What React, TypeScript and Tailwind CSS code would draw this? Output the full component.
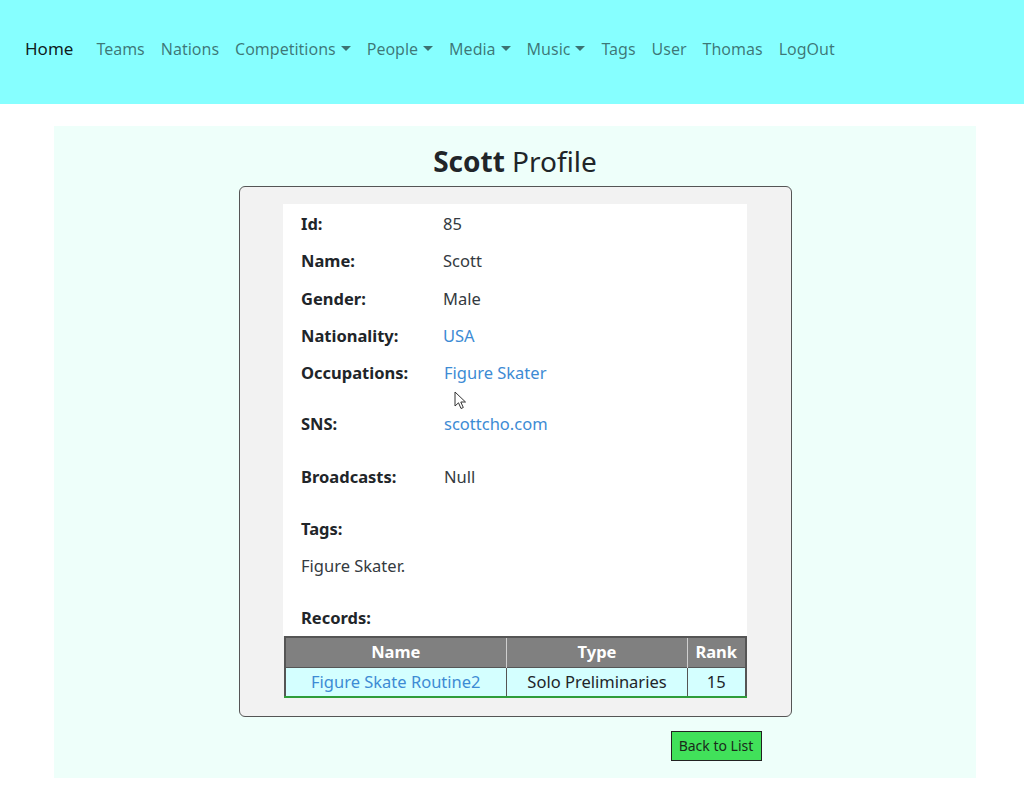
import React from "react";

const Caret = () => (
  <span className="inline-block ml-[5px] align-middle w-0 h-0 border-l-[5px] border-r-[5px] border-t-[5px] border-l-transparent border-r-transparent border-t-current relative top-[-2px]" />
);

function NavItem({ label, caret }: { label: string; caret?: boolean }) {
  return (
    <span className="px-[8px] text-[rgba(0,0,0,0.55)]">
      {label}
      {caret && <Caret />}
    </span>
  );
}

function Row({ label, h, children }: { label: string; h: string; children?: React.ReactNode }) {
  return (
    <div className={`flex items-start pt-[6px] leading-[24px] ${h}`}>
      <div className="w-[142px] shrink-0 font-bold text-[#212529]">{label}</div>
      <div className="text-[#343a40]">{children}</div>
    </div>
  );
}

const linkCls = "text-[#3d8bd4]";

export default function App() {
  return (
    <div className="min-h-[800px] bg-white text-[16px]" style={{ fontFamily: '"Noto Sans", "Open Sans", sans-serif' }}>
      <nav className="h-[104px] bg-[#86ffff] flex items-start pt-[36px] pl-[25px]">
        <span className="text-[17px] text-[rgba(0,0,0,0.9)] mr-[15px] leading-[26px]">Home</span>
        <div className="flex leading-[26px] text-[16px]">
          <NavItem label="Teams" />
          <NavItem label="Nations" />
          <NavItem label="Competitions" caret />
          <NavItem label="People" caret />
          <NavItem label="Media" caret />
          <NavItem label="Music" caret />
          <NavItem label="Tags" />
          <NavItem label="User" />
          <NavItem label="Thomas" />
          <NavItem label="LogOut" />
        </div>
      </nav>

      <div className="ml-[54px] w-[922px] mt-[22px] bg-[#eefffa] pt-[15px] pb-[17px] flex flex-col items-center">
        <h1 className="text-[28px] leading-[40px] text-[#212529] mb-[5px]">
          <span className="font-bold">Scott</span> Profile
        </h1>

        <div className="w-[553px] h-[531px] bg-[#f2f2f2] border border-[#555] rounded-[6px] pt-[17px] flex flex-col items-center relative">
          <div className="w-[464px] bg-white pt-[2px] pl-[18px] text-[16.5px]">
            <Row label="Id:" h="h-[37px]">85</Row>
            <Row label="Name:" h="h-[38px]">Scott</Row>
            <Row label="Gender:" h="h-[37px]">Male</Row>
            <Row label="Nationality:" h="h-[37px]">
              <span className={linkCls}>USA</span>
            </Row>
            <Row label="Occupations:" h="h-[51px]">
              <span className={`${linkCls} ml-[1px]`}>Figure Skater</span>
            </Row>
            <Row label="SNS:" h="h-[53px]">
              <span className={`${linkCls} ml-[1px]`}>scottcho.com</span>
            </Row>
            <Row label="Broadcasts:" h="h-[52px]">
              <span className="ml-[1px]">Null</span>
            </Row>
            <div className="h-[37px] pt-[6px] leading-[24px] font-bold text-[#212529]">Tags:</div>
            <div className="h-[52px] pt-[6px] leading-[24px] text-[#343a40]">Figure Skater.</div>
            <div className="h-[36px] pt-[6px] leading-[24px] font-bold text-[#212529]">Records:</div>
          </div>

          <table className="w-[463px] border-collapse border-2 border-[#555] text-[16.5px] leading-[24px]">
            <thead>
              <tr className="bg-[#808080] text-white font-bold">
                <th className="w-[222px] h-[30px] border-r border-[#cfcfcf] p-0">Name</th>
                <th className="w-[181px] border-r border-[#cfcfcf] p-0">Type</th>
                <th className="p-0">Rank</th>
              </tr>
            </thead>
            <tbody>
              <tr className="bg-[#d4ffff] border-t border-[#555] border-b-2 border-b-[#2e9d3a]">
                <td className="h-[30px] text-center border-r border-[#555] p-0">
                  <span className={linkCls}>Figure Skate Routine2</span>
                </td>
                <td className="text-center border-r border-[#555] text-[#212529] p-0">Solo Preliminaries</td>
                <td className="text-center text-[#212529] p-0">15</td>
              </tr>
            </tbody>
          </table>

          <svg className="absolute left-[214px] top-[204px]" width="14" height="20" viewBox="0 0 14 20">
            <path d="M1 1 L1 15 L4.5 11.8 L7 17.5 L9.3 16.5 L6.8 11 L11.5 11 Z" fill="white" stroke="#333" strokeWidth="1" strokeLinejoin="round" />
          </svg>
        </div>

        <div className="w-[553px] flex justify-end pr-[30px] mt-[14px]">
          <button className="w-[91px] h-[30px] bg-[#41e15a] border border-[#222] text-[14px] text-[#1a2a1a] leading-[20px]">
            Back to List
          </button>
        </div>
      </div>
    </div>
  );
}
